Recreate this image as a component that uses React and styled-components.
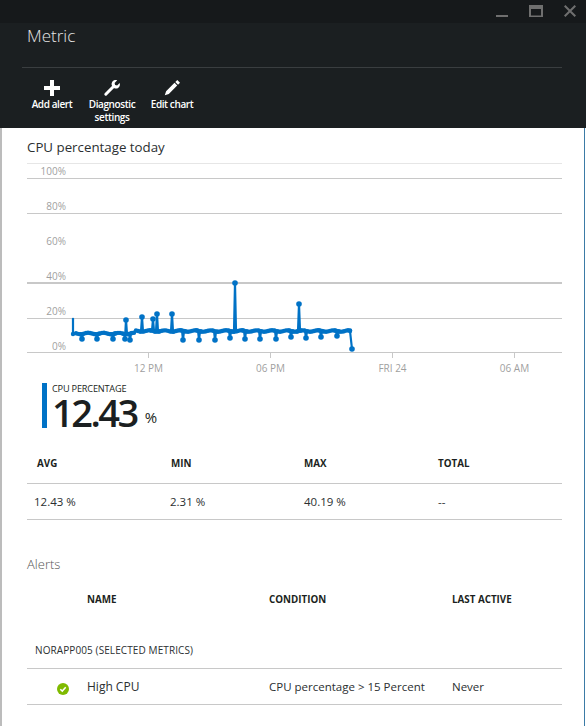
import React from "react";
import styled, { createGlobalStyle } from "styled-components";

const Global = createGlobalStyle`
  html, body { margin: 0; padding: 0; background: #fff; }
  body { font-family: "Open Sans", "Noto Sans", "Liberation Sans", sans-serif; color: #1b1f21; }
  * { box-sizing: border-box; }
`;

const Page = styled.div`
  width: 586px;
  height: 726px;
  display: flex;
  flex-direction: column;
  overflow: hidden;
`;

const TitleBar = styled.div`
  height: 23px;
  background: #16191b;
  display: flex;
  justify-content: flex-end;
  align-items: flex-start;
  padding: 5px 10px 0 0;
  gap: 21px;
`;

const WinIcon = styled.svg`
  display: block;
  height: 12px;
  width: ${p => p.$w}px;
`;

const Header = styled.header`
  height: 105px;
  background: #1b1f21;
  padding: 0 24px 0 22px;
  display: flex;
  flex-direction: column;
`;

const Title = styled.h1`
  margin: 0;
  height: 45px;
  padding: 1px 0 0 5px;
  font-size: 17px;
  line-height: 24px;
  font-weight: 300;
  color: #e6e6e6;
  border-bottom: 1px solid #3a3e40;
`;

const Toolbar = styled.div`
  display: flex;
  padding-top: 11px;
`;

const ToolButton = styled.div`
  width: 60px;
  display: flex;
  flex-direction: column;
  align-items: center;
  color: #fff;
  font-size: 10px;
  line-height: 13px;
  font-weight: 600;
  letter-spacing: -0.4px;
  text-align: center;
  & > svg { display: block; margin-bottom: 1px; }
`;

const Body = styled.main`
  flex: 1;
  border-left: 2px solid #bcbcbc;
  border-right: 1px solid #3b7ba6;
  margin-right: 1px;
  padding: 0 22px 0 25px;
  display: flex;
  flex-direction: column;
`;

const ChartTitle = styled.h2`
  margin: 0;
  padding-top: 10px;
  height: 32px;
  font-size: 13.3px;
  line-height: 18px;
  font-weight: 400;
  color: #2b2f31;
`;

const ChartSvg = styled.svg`
  display: block;
  width: 535px;
  height: 220px;
  margin-bottom: 3px;
  text { font-family: "Open Sans", sans-serif; font-size: 10px; fill: #9f9f9f; }
`;

const Readout = styled.div`
  margin-left: 15px;
  height: 45px;
  border-left: 5px solid #0072c6;
  padding-left: 5px;
`;

const ReadoutLabel = styled.div`
  font-size: 9.2px;
  line-height: 11px;
  letter-spacing: -0.2px;
  color: #1b1f21;
`;

const ReadoutValue = styled.div`
  font-size: 38px;
  line-height: 36px;
  font-weight: 600;
  letter-spacing: -2.5px;
  color: #1b1f21;
  white-space: nowrap;
  span {
    font-size: 15px;
    font-weight: 400;
    margin-left: 8px;
    letter-spacing: 0;
    vertical-align: 4px;
  }
`;

const StatsHead = styled.div`
  margin-top: 25px;
  height: 31px;
  padding-bottom: 10px;
  display: grid;
  grid-template-columns: 144px 133px 134px 1fr;
  align-items: center;
  border-bottom: 1px solid #c8c8c8;
`;

const StatsRow = styled.div`
  height: 36px;
  display: grid;
  grid-template-columns: 136px 134px 134px 1fr;
  align-items: center;
  border-bottom: 1px solid #c8c8c8;
  padding-left: 7px;
  font-size: 11.5px;
  color: #2b2f31;
`;

const ColHead = styled.div`
  font-size: 9.8px;
  font-weight: 700;
  color: #1b1f21;
  padding-left: ${p => p.$inset || 0}px;
`;

const SectionTitle = styled.h3`
  margin: 34px 0 0;
  height: 20px;
  font-size: 13px;
  line-height: 20px;
  font-weight: 300;
  color: #555;
`;

const AlertsGrid = styled.div`
  display: grid;
  grid-template-columns: 60px 182px 183px 1fr;
  align-items: center;
`;

const AlertsHead = styled(AlertsGrid)`
  margin-top: 17px;
  height: 16px;
`;

const GroupTitle = styled.div`
  height: 62px;
  padding: 36px 0 0 8px;
  font-size: 10px;
  line-height: 14px;
  font-weight: 500;
  color: #2b2f31;
  letter-spacing: 0.1px;
  border-bottom: 1px solid #c8c8c8;
`;

const AlertRow = styled(AlertsGrid)`
  height: 36px;
  font-size: 11.5px;
  color: #2b2f31;
  border-bottom: 1px solid #c8c8c8;
`;

const AlertName = styled.div`
  font-size: 12px;
  font-weight: 500;
`;

const StatusCell = styled.div`
  padding: 4px 0 0 30px;
  svg { display: block; }
`;

const gridLines = [
  { y: 3.5, c: "#e6e6e6", w: 1 },
  { y: 18.5, c: "#c8c8c8", w: 1 },
  { y: 53.5, c: "#c8c8c8", w: 1 },
  { y: 123, c: "#c8c8c8", w: 2 },
  { y: 158.5, c: "#c8c8c8", w: 1 },
  { y: 192.5, c: "#c8c8c8", w: 1 },
];
const yLabels = [
  ["100%", 15], ["80%", 50], ["60%", 85], ["40%", 120], ["20%", 155], ["0%", 190],
];
const xLabels = [
  ["12 PM", 121.5], ["06 PM", 243.5], ["FRI 24", 365.5], ["06 AM", 487.5],
];

const dips = { 82: 339, 97: 339, 113: 339, 125: 339, 130: 340, 183: 340, 199: 340, 215: 340, 230: 338, 245: 339, 260: 339, 276: 339, 291: 337, 306: 338, 321: 337, 337: 336 };
const spikes = { 126: 320, 142: 317, 153: 319, 157: 314, 172: 314, 235: 283, 299: 304 };

const series = (() => {
  const pts = [[73, 319], [73, 334]];
  const keys = { ...dips, ...spikes };
  for (let x = 75; x <= 350; x += 1) {
    if (keys[x]) { pts.push([x, keys[x]]); continue; }
    const near = [1, -1, 2, -2].some(d => keys[x + d]);
    if (x % 2 !== 0 && !near) continue;
    const base = x < 135 ? 333.5 : 331;
    const wob = Math.sin(x * 0.41) * 0.7;
    pts.push([x, base + wob]);
  }
  pts.push([350, 331], [352, 349]);
  return pts;
})();

const toLocal = ([x, y]) => [x - 27, y - 160];

const Chart = () => {
  const line = series.map(toLocal).map(p => p.join(",")).join(" ");
  return (
    <ChartSvg viewBox="0 0 535 220">
      {gridLines.map(g => (
        <line key={g.y} x1="0" x2="535" y1={g.y} y2={g.y} stroke={g.c} strokeWidth={g.w} />
      ))}
      {yLabels.map(([t, y]) => (
        <text key={t} x="39" y={y} textAnchor="end">{t}</text>
      ))}
      {xLabels.map(([t, x]) => (
        <g key={t}>
          <line x1={x} x2={x} y1="193" y2="198" stroke="#c8c8c8" />
          <text x={x} y="212" textAnchor="middle">{t}</text>
        </g>
      ))}
      <polyline points={line} fill="none" stroke="#0072c6" strokeWidth="2.2" strokeLinejoin="round" />
      {series.map(toLocal).map(([x, y], i) => {
        const big = dips[x + 27] || spikes[x + 27] || x + 27 === 352;
        return <circle key={i} cx={x} cy={y} r={big ? 2.8 : i === 0 ? 1.2 : 2.2} fill="#0072c6" />;
      })}
    </ChartSvg>
  );
};

export default function App() {
  return (
    <Page>
      <Global />
      <TitleBar>
        <WinIcon $w={12} viewBox="0 0 12 12">
          <rect x="0" y="10" width="12" height="2" fill="#6f6f6f" />
        </WinIcon>
        <WinIcon $w={14} viewBox="0 0 14 12">
          <path fill="#6f6f6f" fillRule="evenodd" d="M0 0h14v12H0zM2 4v6.500h10V4z" />
        </WinIcon>
        <WinIcon $w={12} viewBox="0 0 12 12">
          <path stroke="#6f6f6f" strokeWidth="2" fill="none" d="M.700.700l10.600 10.600M11.300.700L.700 11.300" />
        </WinIcon>
      </TitleBar>
      <Header>
        <Title>Metric</Title>
        <Toolbar>
          <ToolButton>
            <svg width="18" height="18" viewBox="0 0 18 18"><path fill="#fff" d="M7 1h4v6h6v4h-6v6H7v-6H1V7h6z" /></svg>
            Add alert
          </ToolButton>
          <ToolButton>
            <svg width="18" height="18" viewBox="0 0 18 18">
              <path stroke="#fff" strokeWidth="3" strokeLinecap="round" fill="none" d="M2.800 15.200L10.500 7.500" />
              <path fill="#fff" d="M14.200 1.300c-2-.6-4 .1-5 1.600-.8 1.200-.8 2.800-.1 4.100L11 9c1.300.7 2.900.7 4.100-.1 1.500-1 2.200-3 1.600-5l-2.600 2.500-2-.5-.5-2z" />
            </svg>
            Diagnostic<br />settings
          </ToolButton>
          <ToolButton>
            <svg width="18" height="18" viewBox="0 0 18 18">
              <path fill="#fff" d="M14.300 1L17 3.700l-2 2L12.300 3zM11.500 3.800l2.700 2.700-8.400 8.400L1.800 16.200l1.300-4z" />
            </svg>
            Edit chart
          </ToolButton>
        </Toolbar>
      </Header>
      <Body>
        <ChartTitle>CPU percentage today</ChartTitle>
        <Chart />
        <Readout>
          <ReadoutLabel>CPU PERCENTAGE</ReadoutLabel>
          <ReadoutValue>12.43<span>%</span></ReadoutValue>
        </Readout>
        <StatsHead>
          <ColHead $inset={10}>AVG</ColHead>
          <ColHead>MIN</ColHead>
          <ColHead>MAX</ColHead>
          <ColHead>TOTAL</ColHead>
        </StatsHead>
        <StatsRow>
          <div>12.43 %</div>
          <div>2.31 %</div>
          <div>40.19 %</div>
          <div>--</div>
        </StatsRow>
        <SectionTitle>Alerts</SectionTitle>
        <AlertsHead>
          <div />
          <ColHead>NAME</ColHead>
          <ColHead>CONDITION</ColHead>
          <ColHead>LAST ACTIVE</ColHead>
        </AlertsHead>
        <GroupTitle>NORAPP005 (SELECTED METRICS)</GroupTitle>
        <AlertRow>
          <StatusCell>
            <svg width="12" height="12" viewBox="0 0 12 12">
              <circle cx="6" cy="6" r="6" fill="#7fba00" />
              <path d="M3.300 6.200l2 1.900 3.400-3.800" fill="none" stroke="#fff" strokeWidth="1.500" />
            </svg>
          </StatusCell>
          <AlertName>High CPU</AlertName>
          <div>CPU percentage &gt; 15 Percent</div>
          <div>Never</div>
        </AlertRow>
      </Body>
    </Page>
  );
}
